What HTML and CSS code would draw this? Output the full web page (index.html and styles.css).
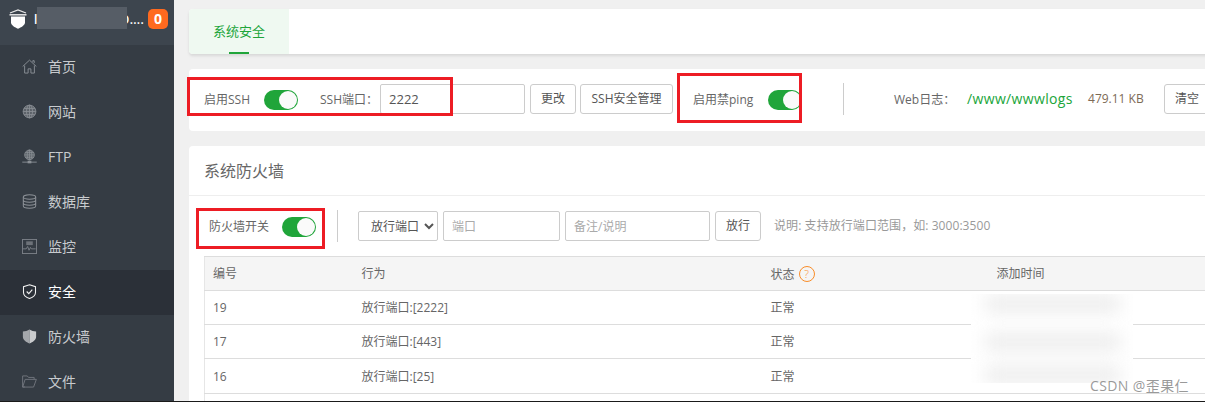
FILE: index.html
```html
<!DOCTYPE html>
<html lang="zh-CN">
<head>
<meta charset="utf-8">
<title>系统安全</title>
<link rel="stylesheet" href="styles.css">
</head>
<body>
<div class="app">
  <aside class="sidebar">
    <div class="brand">
      <svg class="brand-logo" viewBox="0 0 18 20"><path d="M1 4 9 1l8 3" fill="none" stroke="#e8e8e8" stroke-width="1.300"/><path d="M.5 5.800h17" stroke="#e8e8e8" stroke-width="1.500"/><path d="M2 7.500h14v6c0 2.800-4 5-7 6.200-3-1.200-7-3.400-7-6.200z" fill="#fff"/></svg>
      <span class="brand-name">
        <span class="brand-text">l</span><span class="brand-text brand-tail">D....</span>
        <span class="brand-mask"></span>
      </span>
      <span class="badge">0</span>
    </div>
    <nav class="menu">
      <a class="menu-item"><svg class="menu-icon" viewBox="0 0 16 16"><path d="M.7 8 8 1.200 15.300 8M2.800 7v8h3.700v-4.500h3V15h3.700V7M11.500 3V1.800h1.500v2.600" fill="none" stroke="#8b9096" stroke-width="1"/></svg>首页</a>
      <a class="menu-item"><svg class="menu-icon" viewBox="0 0 16 16"><g fill="none" stroke="#8b9096" stroke-width=".9"><circle cx="8" cy="8" r="6.800" fill="#5c6269"/><ellipse cx="8" cy="8" rx="3.200" ry="6.800"/><path d="M8 1.200v13.600M1.200 8h13.600M2.200 4.700h11.600M2.200 11.300h11.600"/></g></svg>网站</a>
      <a class="menu-item"><svg class="menu-icon" viewBox="0 0 16 16"><g fill="none" stroke="#8b9096" stroke-width=".8"><circle cx="8" cy="6.300" r="5.200" fill="#5c6269"/><ellipse cx="8" cy="6.300" rx="2.400" ry="5.200"/><path d="M8 1v10.500M2.800 6.300h10.400M3.500 3.800h9M3.500 8.800h9"/><path d="M.3 14h15.400" stroke-width="1"/></g><rect x="6" y="12.500" width="4" height="2.800" fill="#8b9096"/></svg>FTP</a>
      <a class="menu-item"><svg class="menu-icon" viewBox="0 0 16 16"><g fill="none" stroke="#8b9096" stroke-width="1.100"><ellipse cx="8" cy="3.200" rx="6.600" ry="2.300"/><path d="M1.400 3.200v9.600c0 1.300 3 2.300 6.600 2.300s6.600-1 6.600-2.300V3.200M1.400 6.400c0 1.300 3 2.300 6.600 2.300s6.600-1 6.600-2.300M1.400 9.600c0 1.300 3 2.300 6.600 2.300s6.600-1 6.600-2.300"/></g></svg>数据库</a>
      <a class="menu-item"><svg class="menu-icon" viewBox="0 0 16 16"><g fill="none" stroke="#7b8087" stroke-width="1"><rect x=".5" y=".5" width="15" height="15"/><path d="M1 10.500h3.500l1.500-2.500 1.500 4 1.500-3 1 1.500h4.500"/></g><rect x="4.500" y="2.500" width="7" height="4" fill="#6d7279"/></svg>监控</a>
      <a class="menu-item is-active"><svg class="menu-icon" viewBox="0 0 16 17"><path d="M8 .8 14.800 3v6.500c0 3.300-3.600 5.700-6.800 6.900-3.200-1.200-6.800-3.600-6.800-6.900V3z" fill="none" stroke="#f2f2f2" stroke-width="1.200"/><path d="m4.800 8.500 2.400 2.400 4-4.400" fill="none" stroke="#f2f2f2" stroke-width="1.300"/></svg>安全</a>
      <a class="menu-item"><svg class="menu-icon" viewBox="0 0 16 17"><path d="M8 .5C6 1.800 3 2.600.5 2.800v6.400c0 3.200 3.800 6 7.500 7.300z" fill="#a5a8ac"/><path d="M8 .5c2 1.300 5 2.100 7.500 2.300v6.400c0 3.200-3.800 6-7.500 7.300z" fill="#c9cbcd"/></svg>防火墙</a>
      <a class="menu-item"><svg class="menu-icon menu-icon-wide" viewBox="0 0 16 14"><path d="M3 12.800 .6 13V1h5l1.300 1.600H13v2M.6 13h11.800l3-8.300H3.300z" fill="none" stroke="#72777e" stroke-width="1"/></svg>文件</a>
    </nav>
  </aside>

  <main class="content">
    <section class="tabs-card">
      <div class="tab">系统安全</div>
    </section>

    <section class="panel ssh-panel">
      <span class="label">启用SSH</span>
      <span class="switch switch-ssh"></span>
      <span class="label port-label">SSH端口：</span>
      <input class="field port-field" value="2222">
      <button class="btn btn-change">更改</button>
      <button class="btn btn-manage">SSH安全管理</button>
      <span class="label ping-label">启用禁ping</span>
      <span class="switch switch-ping"></span>
      <span class="vline vline-log"></span>
      <span class="label log-label">Web日志：</span>
      <a class="log-path">/www/wwwlogs</a>
      <span class="log-size">479.11 KB</span>
      <button class="btn btn-clear">清空</button>
    </section>

    <section class="panel firewall">
      <h2 class="firewall-title">系统防火墙</h2>
      <div class="fw-tools">
        <span class="label">防火墙开关</span>
        <span class="switch switch-fw"></span>
        <span class="vline vline-fw"></span>
        <select class="select"><option>放行端口</option></select>
        <input class="field field-port" placeholder="端口">
        <input class="field field-note" placeholder="备注/说明">
        <button class="btn btn-allow">放行</button>
        <span class="hint">说明: 支持放行端口范围，如: 3000:3500</span>
      </div>
      <table class="rules">
        <colgroup><col class="col-id"><col class="col-action"><col class="col-state"><col class="col-time"></colgroup>
        <thead>
          <tr><th>编号</th><th>行为</th><th>状态 <span class="help">?</span></th><th>添加时间</th></tr>
        </thead>
        <tbody>
          <tr><td>19</td><td>放行端口:[2222]</td><td>正常</td><td></td></tr>
          <tr><td>17</td><td>放行端口:[443]</td><td>正常</td><td></td></tr>
          <tr class="row-tall"><td>16</td><td>放行端口:[25]</td><td>正常</td><td></td></tr>
          <tr><td></td><td></td><td></td><td></td></tr>
        </tbody>
      </table>
    </section>
  </main>
</div>

<div class="mark mark-ssh"></div>
<div class="mark mark-ping"></div>
<div class="mark mark-fw"></div>
<div class="blur-patch"><i></i><i></i><i></i></div>
<div class="watermark">CSDN @歪果仁</div>
</body>
</html>
```
FILE: styles.css
```css
* { box-sizing: border-box; }
html, body { margin: 0; height: 402px; overflow: hidden; }
body {
  position: relative;
  width: 1205px;
  background: #f0f0f0;
  color: #666;
  font: 12px/1.4 "Open Sans", "Noto Sans CJK SC", sans-serif;
}
.app {
  display: grid;
  grid-template-columns: 174px 1100px;
  height: 401px;
  overflow: hidden;
}
body::after {
  content: "";
  position: absolute;
  left: 0; right: 0; bottom: 0;
  height: 1px;
  background: #1a1a1a;
}

/* sidebar */
.sidebar { background: #353c44; height: 401px; overflow: hidden; }
.brand {
  height: 45px;
  background: #3d454e;
  display: flex;
  align-items: center;
  padding: 0 6px 7px 9px;
}
.brand-logo { width: 18px; height: 20px; flex: none; }
.brand-name {
  position: relative;
  flex: 1;
  display: flex;
  justify-content: space-between;
  padding: 2px 4px 0 7px;
  color: #fff;
  font-size: 12px;
  font-weight: 600;
}
.brand-mask {
  position: absolute;
  left: 10px; top: -3px;
  width: 90px; height: 22px;
  background: #565d66;
}
.brand-tail { letter-spacing: .3px; }
.badge {
  width: 20px; height: 20px;
  border-radius: 5px;
  background: #ff6a1f;
  color: #fff;
  font-weight: 700;
  font-size: 14px;
  line-height: 20px;
  text-align: center;
}
.menu-item {
  height: 45px;
  display: flex;
  align-items: center;
  padding: 0 0 2px 22px;
  color: #c8cbce;
  font-size: 14px;
}
.menu-icon { width: 15px; height: 15px; margin-right: 11px; flex: none; }
.menu-icon-wide { width: 15px; height: 13px; }
.is-active { background: #2b3038; color: #fff; }

/* main column */
.content { padding: 9px 0 0 15px; display: flex; flex-direction: column; }
.tabs-card {
  height: 45px;
  background: #fff;
  border-radius: 4px 0 0 4px;
  box-shadow: 0 2px 3px rgba(0,0,0,.1);
  flex: none;
}
.tab {
  position: relative;
  width: 100px;
  height: 45px;
  line-height: 45px;
  text-align: center;
  background: #eff9f1;
  color: #20a53a;
  font-size: 13px;
  border-radius: 4px 0 0 4px;
}
.tab::after {
  content: "";
  position: absolute;
  left: 40px; bottom: 0;
  width: 20px; height: 2px;
  background: #20a53a;
}
.panel { background: #fff; border-radius: 4px 0 0 4px; flex: none; }
.ssh-panel {
  margin-top: 15px;
  height: 62px;
  display: flex;
  align-items: center;
  padding: 0 0 2px 15px;
}
.label { color: #666; white-space: nowrap; font-size: 12px; margin-top: 2px; }
.switch {
  position: relative;
  display: block;
  flex: none;
  width: 34px; height: 20px;
  margin-top: 2px;
  border-radius: 10px;
  background: #20a53a;
}
.switch::after {
  content: "";
  position: absolute;
  right: 1px; top: 1px;
  width: 18px; height: 18px;
  border-radius: 50%;
  background: #fafafa;
}
.switch-ssh { margin-left: 14px; }
.port-label { margin-left: 22px; width: 60px; }
.field {
  height: 30px;
  border: 1px solid #ccc;
  border-radius: 2px;
  padding: 0 8px;
  font: inherit;
  color: #555;
  background: #fff;
  outline: 0;
}
.field::placeholder { color: #aaa; opacity: 1; }
.port-field { width: 145px; font-size: 13px; }
.btn {
  height: 30px;
  padding: 0;
  border: 1px solid #ccc;
  border-radius: 3px;
  background: #fff;
  color: #555;
  font: inherit;
  white-space: nowrap;
  flex: none;
}
.btn-change { width: 46px; margin-left: 5px; }
.btn-manage { width: 93px; margin-left: 4px; }
.ping-label { margin-left: 20px; width: 75px; }
.vline { display: block; width: 1px; background: #ccc; flex: none; }
.vline-log { height: 32px; margin-left: 41px; }
.log-label { margin-left: 50px; width: 73px; }
.log-path { color: #20a53a; font-size: 14px; letter-spacing: .35px; width: 121px; white-space: nowrap; }
.log-size { color: #7d6a55; width: 76px; white-space: nowrap; }
.btn-clear { width: 46px; }

.firewall { margin-top: 15px; height: 270px; padding-left: 15px; }
.firewall-title {
  margin: 0 0 0 -15px;
  height: 50px;
  padding: 13px 0 0 15px;
  border-bottom: 1px solid #eee;
  font-size: 16px;
  font-weight: 400;
  line-height: 24px;
  color: #666;
}
.fw-tools { height: 60px; display: flex; align-items: center; padding-left: 5px; }
.switch-fw { margin-left: 13px; }
.vline-fw { height: 32px; margin-left: 21px; }
.select {
  width: 80px; height: 30px;
  margin-left: 20px;
  border: 1px solid #ccc;
  border-radius: 2px;
  background: #fff;
  color: #555;
  font: inherit;
  padding-left: 8px;
}
.field-port { width: 117px; margin-left: 5px; }
.field-note { width: 145px; margin-left: 5px; }
.btn-allow { width: 46px; margin-left: 5px; }
.hint { margin-left: 13px; color: #999; white-space: nowrap; letter-spacing: .07px; }

.rules {
  width: 1010px;
  table-layout: fixed;
  border-collapse: collapse;
  border-left: 1px solid #e6e6e6;
}
.col-id { width: 149px; }
.col-action { width: 409px; }
.col-state { width: 226px; }
.rules th, .rules td {
  height: 34px;
  padding: 2px 8px 0;
  text-align: left;
  font-weight: 400;
  color: #666;
  border-bottom: 1px solid #ddd;
}
.rules th { background: #f5f5f5; border-top: 1px solid #ddd; }
.rules .row-tall td { height: 35px; }
.help {
  display: inline-block;
  width: 16px; height: 16px;
  border: 1px solid #f98d29;
  border-radius: 50%;
  color: #f98d29;
  font-size: 11px;
  font-weight: 300;
  line-height: 14px;
  text-align: center;
  vertical-align: 1px;
  margin-left: 1px;
}

/* annotations laid over the screenshot */
.mark { position: absolute; border: 3px solid #ed1c24; pointer-events: none; }
.mark-ssh { left: 187px; top: 77px; width: 266px; height: 39px; }
.mark-ping { left: 677px; top: 73px; width: 125px; height: 50px; }
.mark-fw { left: 196px; top: 208px; width: 129px; height: 41px; }
.blur-patch {
  position: absolute;
  left: 971px; top: 294px;
  width: 162px; height: 89px;
  background: #fff;
  overflow: hidden;
}
.blur-patch i {
  position: absolute;
  left: 14px;
  width: 136px; height: 16px;
  background: #ebebeb;
  filter: blur(9px);
}
.blur-patch i:nth-child(1) { top: 2px; }
.blur-patch i:nth-child(2) { top: 40px; }
.blur-patch i:nth-child(3) { top: 73px; }
.watermark {
  position: absolute;
  left: 1090px; top: 377px;
  color: rgba(120,120,120,.75);
  font: 14px/18px "Open Sans", "Noto Sans CJK SC", sans-serif;
  letter-spacing: .4px;
  white-space: nowrap;
}
```
